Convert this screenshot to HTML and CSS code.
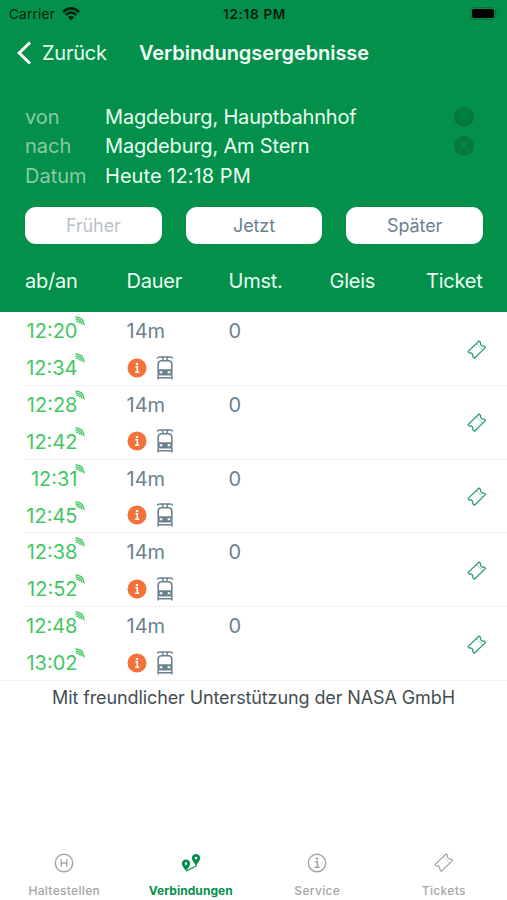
FILE: index.html
```html
<!DOCTYPE html>
<html lang="de">
<head>
<meta charset="utf-8">
<meta name="viewport" content="width=device-width, initial-scale=1">
<title>Verbindungsergebnisse</title>
<link rel="stylesheet" href="styles.css">
</head>
<body>
<svg class="defs" width="0" height="0" aria-hidden="true">
  <symbol id="ticket" viewBox="0 0 20 20"><path d="M1 11.6 12 1 13.6 2.5C12.8 4.7 14.9 6.6 17 6L18.6 7.4 7.4 18.2 5.7 16.6C6.5 14.4 4.5 12.4 2.4 13.1Z" fill="none" stroke="currentColor" stroke-width="1.2" stroke-linejoin="round"/><path d="m9.9 4.1 5.6 5.8" stroke="currentColor" stroke-width=".8" stroke-dasharray="1.3 .9"/></symbol>
  <symbol id="signal" viewBox="0 0 10 10"><path d="M.5.3Q8.7.5 9.6 9.4L6 7.8Q4.5 5.5 1 4.8Z" fill="currentColor" opacity=".35"/><path d="M.5.8Q8.5 1 9.2 9.2M.5 3Q6 3.2 7 8.4M1 5Q4 5.5 5.3 7.5" fill="none" stroke="currentColor" stroke-width="1.2"/></symbol>
  <symbol id="info" viewBox="0 0 20 20"><circle cx="10" cy="10" r="9.5" fill="#f4713a"/><path d="M8.4 8.8h1.9v5.4M8.2 14.2h4" fill="none" stroke="#fff" stroke-width="1.6"/><circle cx="10" cy="6" r="1.3" fill="#fff"/></symbol>
  <symbol id="tram" viewBox="0 0 18 24"><path d="M1.2 2.6Q1.8 1 4 1h10q2.2 0 2.8 1.6M6.2 1.2l1.2 3.3M11.8 1.2l-1.2 3.3" fill="none" stroke="currentColor" stroke-width="1.4"/><path fill="currentColor" fill-rule="evenodd" d="M5 4h8q3.6.4 3.6 4v9.2q0 2.2-2.2 2.4H3.6q-2.2-.2-2.2-2.4V8Q1.4 4.4 5 4Zm.2 1.6Q3 6 3 8.2v5h12v-5q0-2.2-2.2-2.6ZM3.7 15.2v2h2.6v-2Zm8 0v2h2.6v-2Z"/><path d="M2.1 18.5v5M15.9 18.5v5M2.5 21.8h13" fill="none" stroke="currentColor" stroke-width="1.5"/></symbol>
  <symbol id="clear" viewBox="0 0 20 20"><circle cx="10" cy="10" r="10" fill="#047840"/><path d="m6.3 6.3 7.4 7.4m0-7.4-7.4 7.4" stroke="#03904b" stroke-width="1.2"/></symbol>
</svg>
<header class="header">
  <div class="status">
    <div class="network"><span class="carrier">Carrier</span>
    <svg class="wifi" viewBox="0 0 18 14"><path d="M1 5Q9-2.2 17 5M3.7 8Q9 3.1 14.3 8" fill="none" stroke="currentColor" stroke-width="2.5"/><path d="M6 10.2Q9 7.5 12 10.2L9 13.4Z" fill="currentColor"/></svg></div>
    <span class="clock">12:18 PM</span>
    <svg class="battery" viewBox="0 0 30 14"><rect x=".5" y=".5" width="25" height="12" rx="3.5" fill="none" stroke="#02703b"/><rect x="2" y="2" width="22" height="9" rx="2" fill="#000"/><path d="M27 4.8q1.8 1.8 0 3.6Z" fill="#02602f"/></svg>
  </div>
  <nav class="navbar">
    <svg class="back" viewBox="0 0 15 24"><path d="M13 1.5 2.2 12 13 22.5" fill="none" stroke="currentColor" stroke-width="3"/></svg>
    <span class="back-label">Zurück</span>
    <h1 class="title">Verbindungsergebnisse</h1>
  </nav>
  <div class="query">
    <span class="key">von</span><span class="value">Magdeburg, Hauptbahnhof</span><svg class="clear"><use href="#clear"/></svg>
    <span class="key">nach</span><span class="value">Magdeburg, Am Stern</span><svg class="clear"><use href="#clear"/></svg>
    <span class="key">Datum</span><span class="value date">Heute 12:18 PM</span>
  </div>
  <div class="buttons">
    <button class="button disabled">Früher</button>
    <button class="button">Jetzt</button>
    <button class="button">Später</button>
  </div>
  <div class="columns"><span>ab/an</span><span>Dauer</span><span>Umst.</span><span>Gleis</span><span>Ticket</span></div>
</header>
<main class="results">
  <article class="row">
    <div class="times"><span class="time">12:20<svg class="signal"><use href="#signal"/></svg></span><span class="time">12:34<svg class="signal"><use href="#signal"/></svg></span></div>
    <div class="trip"><span>14m</span><span class="icons"><svg class="info"><use href="#info"/></svg><svg class="tram"><use href="#tram"/></svg></span></div>
    <span class="changes">0</span><svg class="ticket"><use href="#ticket"/></svg>
  </article>
  <article class="row">
    <div class="times"><span class="time">12:28<svg class="signal"><use href="#signal"/></svg></span><span class="time">12:42<svg class="signal"><use href="#signal"/></svg></span></div>
    <div class="trip"><span>14m</span><span class="icons"><svg class="info"><use href="#info"/></svg><svg class="tram"><use href="#tram"/></svg></span></div>
    <span class="changes">0</span><svg class="ticket"><use href="#ticket"/></svg>
  </article>
  <article class="row">
    <div class="times"><span class="time">12:31<svg class="signal"><use href="#signal"/></svg></span><span class="time">12:45<svg class="signal"><use href="#signal"/></svg></span></div>
    <div class="trip"><span>14m</span><span class="icons"><svg class="info"><use href="#info"/></svg><svg class="tram"><use href="#tram"/></svg></span></div>
    <span class="changes">0</span><svg class="ticket"><use href="#ticket"/></svg>
  </article>
  <article class="row">
    <div class="times"><span class="time">12:38<svg class="signal"><use href="#signal"/></svg></span><span class="time">12:52<svg class="signal"><use href="#signal"/></svg></span></div>
    <div class="trip"><span>14m</span><span class="icons"><svg class="info"><use href="#info"/></svg><svg class="tram"><use href="#tram"/></svg></span></div>
    <span class="changes">0</span><svg class="ticket"><use href="#ticket"/></svg>
  </article>
  <article class="row">
    <div class="times"><span class="time">12:48<svg class="signal"><use href="#signal"/></svg></span><span class="time">13:02<svg class="signal"><use href="#signal"/></svg></span></div>
    <div class="trip"><span>14m</span><span class="icons"><svg class="info"><use href="#info"/></svg><svg class="tram"><use href="#tram"/></svg></span></div>
    <span class="changes">0</span><svg class="ticket"><use href="#ticket"/></svg>
  </article>
  <p class="credit">Mit freundlicher Unterstützung der NASA GmbH</p>
</main>
<footer class="tabs">
  <div class="tab"><svg class="tab-icon" viewBox="0 0 20 20"><circle cx="10" cy="10" r="8.7" fill="none" stroke="currentColor" stroke-width="1.4"/><path d="M7.3 6.3v7.4m5.4-7.4v7.4M7.3 10h5.4" fill="none" stroke="currentColor" stroke-width="1.4"/></svg><span>Haltestellen</span></div>
  <div class="tab active"><svg class="tab-icon" viewBox="0 0 20 20"><path fill="currentColor" fill-rule="evenodd" d="M5 6.5a4.2 4.2 0 0 1 4.2 4.2q0 2-4.2 7-4.2-5-4.2-7A4.2 4.2 0 0 1 5 6.5Zm0 2.8a1.3 1.3 0 1 0 0 2.6 1.3 1.3 0 0 0 0-2.6ZM15 1a4.2 4.2 0 0 1 4.2 4.2q0 2-4.2 7-4.2-5-4.2-7A4.2 4.2 0 0 1 15 1Zm0 2.8a1.3 1.3 0 1 0 0 2.6 1.3 1.3 0 0 0 0-2.6Z"/><path d="M5 18.3 15.3 13v-2" fill="none" stroke="currentColor" stroke-width="1.1"/></svg><span>Verbindungen</span></div>
  <div class="tab"><svg class="tab-icon" viewBox="0 0 20 20"><circle cx="10" cy="10" r="8.7" fill="none" stroke="currentColor" stroke-width="1.4"/><path d="M7.8 8.8h2.6v5.2M7.6 14.3h5" fill="none" stroke="currentColor" stroke-width="1.6"/><circle cx="10" cy="5.8" r="1.3" fill="currentColor"/></svg><span>Service</span></div>
  <div class="tab"><svg class="tab-icon"><use href="#ticket"/></svg><span>Tickets</span></div>
</footer>
</body>
</html>
```

FILE: styles.css
```css
* { box-sizing: border-box; }
body {
  margin: 0;
  height: 900px;
  display: flex;
  flex-direction: column;
  overflow: hidden;
  background: #fff;
  color: #6b818e;
  font: 20px/24px Inter, "Liberation Sans", sans-serif;
}
svg { display: block; flex: none; }
.defs { position: absolute; }
.header { height: 312px; flex: none; background: #03904b; color: #e9fff1; }
.status { height: 28px; display: grid; grid-template-columns: 1fr auto 1fr; align-items: center; padding: 0 7px 0 9px; color: #00210f; font-size: 13.5px; line-height: 28px; }
.network { display: flex; align-items: center; gap: 7px; }
.carrier { letter-spacing: .25px; }
.wifi { width: 18px; height: 14px; }
.clock { font-weight: 600; letter-spacing: .7px; color: #001b0c; }
.battery { justify-self: end; width: 30px; height: 14px; }
.navbar { height: 49px; display: flex; align-items: center; padding-left: 17px; }
.back { width: 15px; height: 24px; color: #fff; }
.back-label { width: 97px; margin-left: 10px; letter-spacing: -.25px; }
.title { margin: 0; font-size: 20px; line-height: 24px; font-weight: 600; letter-spacing: -.06px; color: #f5fff8; }
.query { display: grid; grid-template-columns: 80px 1fr 20px; grid-auto-rows: 29.5px; align-items: center; padding: 25px 33px 0 25px; }
.key { color: #8bc9a9; }
.value { letter-spacing: -.18px; white-space: nowrap; }
.date { letter-spacing: .05px; }
.clear { width: 20px; height: 20px; }
.buttons { display: grid; grid-template-columns: repeat(3, 1fr); gap: 24px; padding: 16px 24px 0 25px; }
.button { height: 37px; padding: 0; border: 0; border-radius: 11px; background: #fff; color: #6b818e; font: 18px/37px Inter, sans-serif; letter-spacing: -.1px; }
.disabled { color: #b8c1c8; }
.columns { display: grid; grid-template-columns: 101.5px 102px 101px 1fr auto; padding: 25px 24.5px 0 25px; letter-spacing: -.25px; }
.results { flex: 1; }
.row { height: 73.8px; display: grid; grid-template-columns: 101.5px 102px 1fr 20px; margin-left: 25px; padding-right: 20px; border-bottom: 1.5px solid #f0f1f2; }
.row:nth-of-type(5) { margin-left: 0; padding-left: 25px; }
.times, .trip { display: grid; grid-template-rows: 37px 36px; line-height: 39px; }
.time { position: relative; width: 52.5px; text-align: right; color: #42c762; }
.signal { position: absolute; width: 10px; height: 10px; left: 50px; top: 4px; }
.icons { display: flex; align-items: center; gap: 9px; padding-top: 1px; }
.info { width: 20px; height: 20px; }
.tram { width: 18px; height: 24px; }
.changes { line-height: 39px; }
.ticket { width: 20px; height: 20px; align-self: center; margin-top: 2px; color: #229b65; }
.credit { margin: 0; padding-top: 5px; text-align: center; color: #454e52; font-size: 18px; line-height: 24px; letter-spacing: -.11px; }
.tabs { height: 52px; flex: none; display: grid; grid-template-columns: repeat(4, 1fr); padding-left: 1px; color: #a5a5a5; }
.tab { display: flex; flex-direction: column; align-items: center; padding-top: 5px; font-size: 12px; line-height: 15px; font-weight: 500; letter-spacing: .33px; }
.tab-icon { width: 20px; height: 20px; margin-bottom: 10px; }
.active { color: #03904b; font-weight: 700; letter-spacing: .05px; }
```
